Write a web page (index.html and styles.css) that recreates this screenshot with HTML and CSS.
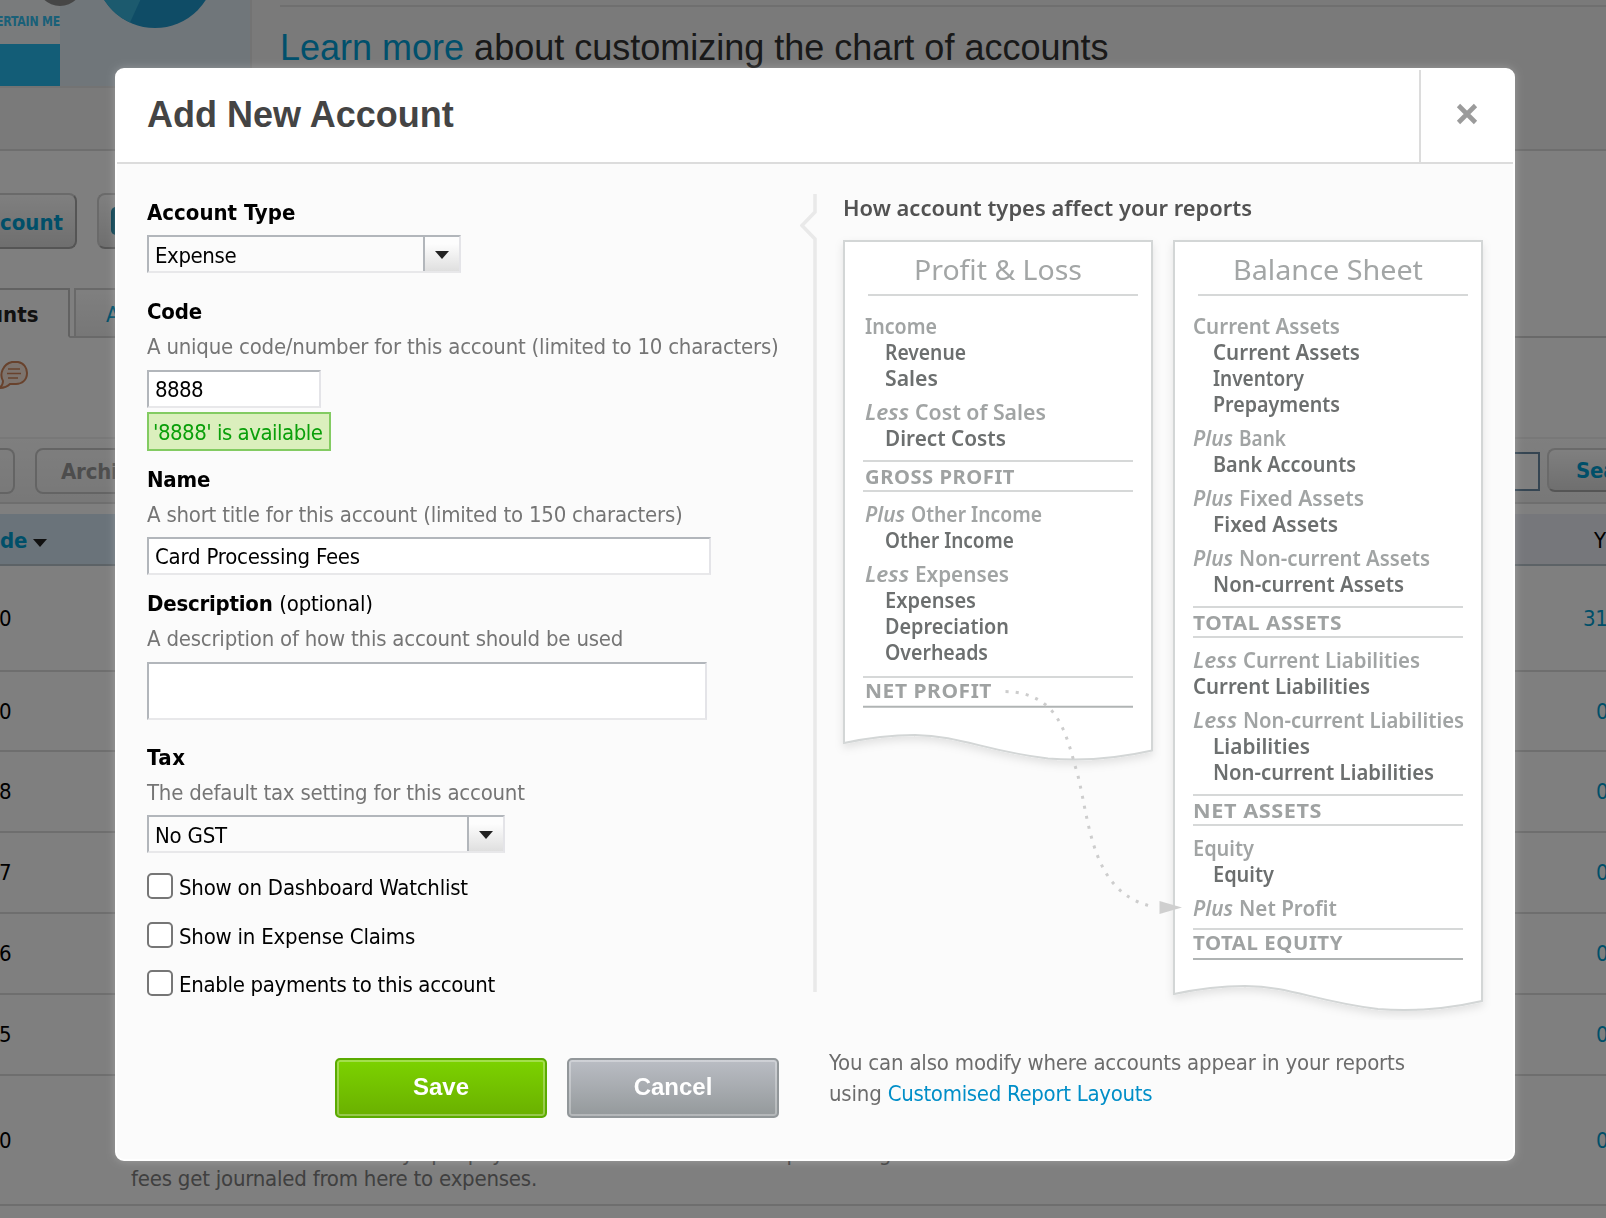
FILE: index.html
```html
<!DOCTYPE html>
<html lang="en">
  <head>
    <meta charset="UTF-8" />
    <meta name="viewport" content="width=device-width, initial-scale=1.0" />
    <title>Chart of Accounts</title>
    <link rel="stylesheet" href="styles.css">
  </head>
  <body>
    <div class="page">
      <section class="banner">
        <svg class="banner-art" width="256" height="92" viewBox="0 0 256 92">
          <rect width="252" height="88" fill="#e6e6e6" />
          <rect width="250" height="86" fill="#e0ecf4" />
          <rect width="60" height="44" fill="#f2f6f8" />
          <rect y="44" width="60" height="42" fill="#26baee" />
          <circle cx="60" cy="-17" r="23" fill="#8c8c8c" />
          <circle cx="155" cy="-32" r="60" fill="#1e98cc" />
          <path d="M155 -32 L130 22.500 A60 60 0 0 1 95 -32 Z" fill="#38b4dc" />
          <text class="art-text" x="-4" y="26" textLength="64" lengthAdjust="spacingAndGlyphs">ERTAIN ME</text>
        </svg>
        <div class="banner-copy"><a href="#">Learn more</a> about customizing the chart of accounts</div>
      </section>

      <div class="toolbar">
        <button class="btn btn-count">count</button>
        <button class="btn btn-next"><span class="btn-icon"></span></button>
      </div>

      <nav class="tabs">
        <span class="tab tab-active">unts</span>
        <span class="tab">A</span>
      </nav>

      <div class="help">
        <svg width="30" height="32" viewBox="0 0 30 32">
          <path d="M12 2 H18 C24 3 27 8 27 13 C27 20 22 24 16 24 H10 C7 27 3 28 -1 28 C2 26 3 24 3 21 C-1 14 3 4 12 2 Z" fill="#fbe9dc" stroke="#d0855a" stroke-width="2" />
          <path d="M8 9 H20 M7 13.500 H21 M8 18 H18" stroke="#d0855a" stroke-width="1.600" />
        </svg>
      </div>

      <div class="actions">
        <button class="btn btn-off btn-cut"></button>
        <button class="btn btn-off btn-archive">Archi</button>
        <span class="search"></span>
        <button class="btn btn-search">Sea</button>
      </div>

      <div class="thead">
        <span class="th-code">de <i class="caret"></i></span>
        <span class="th-ytd">Y</span>
      </div>
      <div class="row row-first"><span>0</span><a href="#" class="wide">31</a></div>
      <div class="row row-80"><span>0</span><a href="#">0</a></div>
      <div class="row"><span>8</span><a href="#">0</a></div>
      <div class="row"><span>7</span><a href="#">0</a></div>
      <div class="row"><span>6</span><a href="#">0</a></div>
      <div class="row"><span>5</span><a href="#">0</a></div>
      <div class="row row-last">
        <span>0</span>
        <p>reconcile invoices created by openpay for our own online sales. CC processing<br />fees get journaled from here to expenses.</p>
        <a href="#">0</a>
      </div>
    </div>

    <div class="overlay">
      <div class="modal">
        <div class="modal-header">
          <h1>Add New Account</h1>
          <button class="close" aria-label="Close">
            <svg width="22" height="22" viewBox="0 0 22 22">
              <path d="M2.500 2.500 L19.500 19.500 M19.500 2.500 L2.500 19.500" stroke="#9b9b9b" stroke-width="4.600" />
            </svg>
          </button>
        </div>

        <div class="modal-body">
          <form class="form">
            <label class="label label-type">Account Type</label>
            <div class="select select-type"><span>Expense</span><i class="arrow"></i></div>

            <label class="label label-code">Code</label>
            <div class="hint">A unique code/number for this account (limited to 10 characters)</div>
            <input class="input input-code" type="text" value="8888" />
            <div class="available">'8888' is available</div>

            <label class="label label-next">Name</label>
            <div class="hint">A short title for this account (limited to 150 characters)</div>
            <input class="input input-name" type="text" value="Card Processing Fees" />

            <label class="label label-next">Description <span class="optional">(optional)</span></label>
            <div class="hint">A description of how this account should be used</div>
            <textarea class="input input-desc"></textarea>

            <label class="label label-tax">Tax</label>
            <div class="hint hint-tax">The default tax setting for this account</div>
            <div class="select select-tax"><span>No GST</span><i class="arrow"></i></div>

            <div class="checks">
              <label class="check"><input type="checkbox" /><span>Show on Dashboard Watchlist</span></label>
              <label class="check"><input type="checkbox" /><span>Show in Expense Claims</span></label>
              <label class="check"><input type="checkbox" /><span>Enable payments to this account</span></label>
            </div>

            <div class="buttons">
              <button type="button" class="action save">Save</button>
              <button type="button" class="action cancel">Cancel</button>
            </div>
          </form>

          <aside class="side">
            <svg class="reports" width="700" height="830" viewBox="800 190 700 830">
              <defs>
                <filter id="paper-shadow" x="-5%" y="-5%" width="110%" height="110%">
                  <feDropShadow dx="0" dy="4" stdDeviation="4" flood-color="#000" flood-opacity="0.100" />
                </filter>
              </defs>

              <path d="M815 194 V212 L802 225.500 L815 239 V992" class="divider" />
              <text class="heading" x="843" y="216" textLength="409" lengthAdjust="spacingAndGlyphs">How account types affect your reports</text>

              <!-- Profit & Loss -->
              <path class="paper" d="M844 241 H1152 V750.500 C1115 759 1080 761 1048 758.500 C985 751 960 735.500 915 735 C890 735 865 738.500 844 743 Z" />
              <text class="title" x="914" y="280" textLength="168" lengthAdjust="spacingAndGlyphs">Profit &amp; Loss</text>
              <path class="rule" d="M868 295 H1138 M863 461 H1133 M863 491 H1133 M863 677 H1133" />
              <path class="rule-dark" d="M863 706.700 H1133" />
              <text class="group" x="865" y="334" textLength="72" lengthAdjust="spacingAndGlyphs">Income</text>
              <text class="item" x="885" y="360" textLength="81" lengthAdjust="spacingAndGlyphs">Revenue</text>
              <text class="item" x="885" y="386" textLength="53" lengthAdjust="spacingAndGlyphs">Sales</text>
              <text class="group op" x="865" y="420" textLength="44" lengthAdjust="spacingAndGlyphs">Less</text>
              <text class="group" x="915" y="420" textLength="131" lengthAdjust="spacingAndGlyphs">Cost of Sales</text>
              <text class="item" x="885" y="446" textLength="121" lengthAdjust="spacingAndGlyphs">Direct Costs</text>
              <text class="total" x="865" y="484" textLength="150" lengthAdjust="spacingAndGlyphs">GROSS PROFIT</text>
              <text class="group op" x="865" y="522" textLength="40" lengthAdjust="spacingAndGlyphs">Plus</text>
              <text class="group" x="911" y="522" textLength="131" lengthAdjust="spacingAndGlyphs">Other Income</text>
              <text class="item" x="885" y="548" textLength="129" lengthAdjust="spacingAndGlyphs">Other Income</text>
              <text class="group op" x="865" y="582" textLength="44" lengthAdjust="spacingAndGlyphs">Less</text>
              <text class="group" x="915" y="582" textLength="94" lengthAdjust="spacingAndGlyphs">Expenses</text>
              <text class="item" x="885" y="608" textLength="91" lengthAdjust="spacingAndGlyphs">Expenses</text>
              <text class="item" x="885" y="634" textLength="124" lengthAdjust="spacingAndGlyphs">Depreciation</text>
              <text class="item" x="885" y="660" textLength="103" lengthAdjust="spacingAndGlyphs">Overheads</text>
              <text class="total" x="865" y="698" textLength="127" lengthAdjust="spacingAndGlyphs">NET PROFIT</text>

              <!-- Balance Sheet -->
              <path class="paper" d="M1174 241 H1482 V1001 C1445 1009.500 1410 1011.500 1378 1009 C1315 1001.500 1290 986 1245 986 C1220 986 1195 989.500 1174 994 Z" />
              <text class="title" x="1233" y="280" textLength="190" lengthAdjust="spacingAndGlyphs">Balance Sheet</text>
              <path class="rule" d="M1198 295 H1468 M1193 607 H1463 M1193 637 H1463 M1193 795 H1463 M1193 825 H1463 M1193 929 H1463" />
              <path class="rule-dark" d="M1193 959 H1463" />
              <text class="group" x="1193" y="334" textLength="147" lengthAdjust="spacingAndGlyphs">Current Assets</text>
              <text class="item" x="1213" y="360" textLength="147" lengthAdjust="spacingAndGlyphs">Current Assets</text>
              <text class="item" x="1213" y="386" textLength="91" lengthAdjust="spacingAndGlyphs">Inventory</text>
              <text class="item" x="1213" y="412" textLength="127" lengthAdjust="spacingAndGlyphs">Prepayments</text>
              <text class="group op" x="1193" y="446" textLength="40" lengthAdjust="spacingAndGlyphs">Plus</text>
              <text class="group" x="1239" y="446" textLength="47" lengthAdjust="spacingAndGlyphs">Bank</text>
              <text class="item" x="1213" y="472" textLength="143" lengthAdjust="spacingAndGlyphs">Bank Accounts</text>
              <text class="group op" x="1193" y="506" textLength="40" lengthAdjust="spacingAndGlyphs">Plus</text>
              <text class="group" x="1239" y="506" textLength="125" lengthAdjust="spacingAndGlyphs">Fixed Assets</text>
              <text class="item" x="1213" y="532" textLength="125" lengthAdjust="spacingAndGlyphs">Fixed Assets</text>
              <text class="group op" x="1193" y="566" textLength="40" lengthAdjust="spacingAndGlyphs">Plus</text>
              <text class="group" x="1239" y="566" textLength="191" lengthAdjust="spacingAndGlyphs">Non-current Assets</text>
              <text class="item" x="1213" y="592" textLength="191" lengthAdjust="spacingAndGlyphs">Non-current Assets</text>
              <text class="total" x="1193" y="630" textLength="149" lengthAdjust="spacingAndGlyphs">TOTAL ASSETS</text>
              <text class="group op" x="1193" y="668" textLength="44" lengthAdjust="spacingAndGlyphs">Less</text>
              <text class="group" x="1243" y="668" textLength="177" lengthAdjust="spacingAndGlyphs">Current Liabilities</text>
              <text class="item" x="1193" y="694" textLength="177" lengthAdjust="spacingAndGlyphs">Current Liabilities</text>
              <text class="group op" x="1193" y="728" textLength="44" lengthAdjust="spacingAndGlyphs">Less</text>
              <text class="group" x="1243" y="728" textLength="221" lengthAdjust="spacingAndGlyphs">Non-current Liabilities</text>
              <text class="item" x="1213" y="754" textLength="97" lengthAdjust="spacingAndGlyphs">Liabilities</text>
              <text class="item" x="1213" y="780" textLength="221" lengthAdjust="spacingAndGlyphs">Non-current Liabilities</text>
              <text class="total" x="1193" y="818" textLength="129" lengthAdjust="spacingAndGlyphs">NET ASSETS</text>
              <text class="group" x="1193" y="856" textLength="61" lengthAdjust="spacingAndGlyphs">Equity</text>
              <text class="item" x="1213" y="882" textLength="61" lengthAdjust="spacingAndGlyphs">Equity</text>
              <text class="group op" x="1193" y="916" textLength="40" lengthAdjust="spacingAndGlyphs">Plus</text>
              <text class="group" x="1239" y="916" textLength="98" lengthAdjust="spacingAndGlyphs">Net Profit</text>
              <text class="total" x="1193" y="950" textLength="150" lengthAdjust="spacingAndGlyphs">TOTAL EQUITY</text>

              <!-- net profit flows into equity -->
              <path class="flow" d="M1005.500 691.500 C1060 693 1066 735 1078 776 C1090 825 1092 895 1155 907" />
              <path d="M1159.500 901 L1182 907.500 L1159.500 914 Z" fill="#cfcfcf" />
            </svg>
            <p class="note">You can also modify where accounts appear in your reports<br />using <a href="#">Customised Report Layouts</a></p>
          </aside>
        </div>
      </div>
    </div>
  </body>
</html>
```
FILE: styles.css
```css
:root {
  --font: "DejaVu Sans Condensed", "Noto Sans", sans-serif;
  --heading-font: "Liberation Sans", Arial, sans-serif;
  --link: #009fd2;
  --line: #dcdcdc;
}

* {
  box-sizing: border-box;
}

body {
  margin: 0;
  font-family: var(--font);
  font-size: 22px;
  letter-spacing: -0.22px;
  color: #000;
  background: #fff;
}

button,
input,
textarea {
  font: inherit;
  letter-spacing: inherit;
  margin: 0;
}

a {
  color: #008ec8;
  text-decoration: none;
}

/* page behind the dialog */
.page {
  height: 1218px;
  overflow: hidden;
}

.page a {
  color: var(--link);
}

.banner {
  display: flex;
  height: 151px;
  background: #f4f4f4;
  border-bottom: 2px solid var(--line);
}

.banner-art {
  flex: none;
}

.art-text {
  font: 700 14px var(--font);
  fill: #34c0f0;
}

.banner-copy {
  flex: 1;
  height: 70px;
  margin: 5px 0 0 24px;
  padding-top: 19px;
  border-top: 2px solid #dedede;
  font: 36px/44px var(--heading-font);
  letter-spacing: 0;
  color: #333;
}

.banner-copy a {
  color: #00a0d8;
}

.toolbar {
  display: flex;
  gap: 20px;
  height: 137px;
  padding-top: 42px;
}

.btn {
  border: 2px solid #d4d4d4;
  border-right-color: #aaa;
  border-bottom-color: #aaa;
  border-radius: 8px;
  background: linear-gradient(#fff, #dedede);
  font-weight: 700;
  color: var(--link);
  white-space: nowrap;
}

.btn-count {
  width: 77px;
  height: 56px;
  padding: 2px 14px 0 0;
  border-left: 0;
  border-radius: 0 8px 8px 0;
  text-align: right;
  letter-spacing: 0;
}

.btn-next {
  width: 220px;
  height: 56px;
  padding: 0 12px;
}

.btn-icon {
  display: block;
  width: 28px;
  height: 28px;
  border-radius: 5px;
  background: #1580a0;
}

.tabs {
  display: flex;
  align-items: flex-start;
  height: 50px;
  border-bottom: 2px solid #d2d2d2;
}

.tab {
  width: 160px;
  height: 50px;
  padding: 10px 30px;
  border: 2px solid #d2d2d2;
  background: linear-gradient(#fff, #eee);
  line-height: 30px;
  color: var(--link);
}

.tab-active {
  width: 70px;
  margin-right: 4px;
  padding: 10px 0;
  border-left: 0;
  border-color: #c4c4c4;
  border-bottom-color: #fff;
  background: #fff;
  font-weight: 700;
  letter-spacing: 0;
  text-indent: -11px;
  color: #222;
}

.help {
  height: 99px;
  padding-top: 22px;
}

.actions {
  display: flex;
  height: 67px;
  padding-top: 9px;
  border-top: 2px solid #f0f0f0;
  border-bottom: 2px solid #dcdcdc;
  background: linear-gradient(#fefefe, #f0f0f0);
}

.btn-off {
  height: 46px;
  border-color: #c8c8c8;
  background: transparent;
  color: #9a9a9a;
}

.btn-cut {
  width: 15px;
  border-left: 0;
  border-radius: 0 8px 8px 0;
}

.btn-archive {
  width: 140px;
  margin-left: 20px;
  padding: 0 24px;
  text-align: left;
}

.search {
  width: 365px;
  height: 39px;
  margin: 4px 7px 0 auto;
  border: 2px solid #6b8ba5;
  background: #fff;
}

.btn-search {
  flex: none;
  width: 59px;
  height: 44px;
  padding: 0 0 0 27px;
  border-right: 0;
  border-radius: 8px 0 0 8px;
  text-align: left;
  overflow: hidden;
}

.thead {
  display: flex;
  justify-content: space-between;
  height: 52px;
  margin-top: 10px;
  border-bottom: 2px solid #b8c4cc;
  background: #eceef6;
  line-height: 53px;
}

.th-code {
  width: 240px;
  height: 50px;
  background: #d4e6f4;
  font-weight: 700;
  color: var(--link);
}

.caret {
  display: inline-block;
  margin-left: -1px;
  border: 7px solid transparent;
  border-top: 8px solid #222;
  border-bottom: 0;
  vertical-align: 1px;
}

.th-ytd {
  width: 12px;
}

.row {
  display: flex;
  align-items: center;
  justify-content: space-between;
  height: 81px;
  border-bottom: 2px solid var(--line);
}

.row-first {
  height: 106px;
}

.row-80 {
  height: 80px;
}

.row span {
  width: 131px;
  text-indent: -1px;
}

.row a {
  width: 10px;
  white-space: nowrap;
}

.row a.wide {
  width: 23px;
}

.row-last {
  height: 130px;
}

.row-last p {
  flex: 1;
  align-self: flex-end;
  margin: 0 0 13px;
  line-height: 25px;
  color: #808080;
}

/* dialog */
.overlay {
  position: fixed;
  inset: 0;
  padding: 68px 91px 57px 115px;
  background: rgba(0, 0, 0, 0.5);
}

.modal {
  height: 1093px;
  border: 2px solid #fff;
  border-radius: 9px;
  background: #fbfbfb;
  box-shadow: 0 0 8px rgba(255, 255, 255, 0.25);
  overflow: hidden;
}

.modal-header {
  display: flex;
  justify-content: space-between;
  height: 94px;
  border-bottom: 2px solid var(--line);
  background: #fff;
}

.modal-header h1 {
  margin: 0;
  padding-left: 30px;
  font: 700 36px/90px var(--heading-font);
  letter-spacing: 0;
  color: #444;
}

.close {
  width: 94px;
  padding: 0;
  border: 0;
  border-left: 2px solid var(--line);
  background: none;
}

.close svg {
  display: block;
  margin: -4px auto 0;
}

.modal-body {
  display: flex;
}

.form {
  width: 683px;
  padding: 34px 0 0 30px;
}

.label {
  display: block;
  line-height: 30px;
  font-weight: 700;
}

.label-type {
  letter-spacing: 0;
}

.label-code {
  margin-top: 24px;
}

.label-next {
  margin-top: 14px;
}

.label-tax {
  margin-top: 23px;
  letter-spacing: 0.6px;
}

.optional {
  font-weight: 400;
}

.hint {
  margin: 5px 0 8px;
  line-height: 30px;
  color: #757575;
}

.hint-tax {
  margin-bottom: 7px;
}

.input,
.select {
  display: block;
  height: 38px;
  border: 2px solid;
  border-color: #b2b6bb #e4e4e8 #e8e8ea #b2b6bb;
  border-radius: 0;
  outline: 0;
}

.input {
  padding: 1px 6px 0;
  background: #fff;
  color: #000;
}

.input-code {
  width: 174px;
  letter-spacing: -0.6px;
}

.input-name {
  width: 564px;
  margin-top: -1px;
}

.input-desc {
  width: 560px;
  height: 58px;
  resize: none;
}

.select {
  display: flex;
  justify-content: space-between;
  padding-left: 6px;
  line-height: 37px;
}

.select-type {
  width: 314px;
  margin-top: 7px;
  letter-spacing: -0.4px;
}

.select-tax {
  width: 358px;
}

.arrow {
  display: flex;
  align-items: center;
  justify-content: center;
  width: 36px;
  border-left: 2px solid #b2b6bb;
  background: linear-gradient(#fdfdfd 20%, #dfdfdf);
}

.arrow::before {
  content: "";
  margin-top: 1px;
  border: 7.5px solid transparent;
  border-top: 8px solid #222;
  border-bottom: 0;
}

.available {
  width: 184px;
  height: 39px;
  margin-top: 4px;
  padding-left: 4px;
  border: 2px solid #83cb62;
  background: #dbefbd;
  line-height: 37px;
  letter-spacing: -0.5px;
  white-space: nowrap;
  color: #0a9f0a;
}

.checks {
  padding-top: 20px;
}

.check {
  display: flex;
  height: 48.5px;
  line-height: 29px;
}

.check:last-child {
  letter-spacing: -0.32px;
}

.check input {
  appearance: none;
  width: 26px;
  height: 26px;
  margin-right: 6px;
  border: 2px solid #767676;
  border-radius: 5px;
  background: #fff;
}

.buttons {
  display: flex;
  gap: 20px;
  margin: 39.5px 0 0 188px;
}

.action {
  width: 212px;
  height: 60px;
  padding: 0 0 2px;
  border: 2px solid #5aab00;
  border-radius: 5px;
  background: linear-gradient(#7cd200, #6ab000);
  box-shadow: inset 0 0 0 2px rgba(255, 255, 255, 0.3);
  font: 700 24px var(--heading-font);
  letter-spacing: 0;
  color: #fff;
}

.cancel {
  border-color: #92979a;
  background: linear-gradient(#babdc4, #94999b);
}

.side {
  padding-top: 26px;
}

.reports {
  display: block;
  letter-spacing: 0;
}

.divider {
  fill: none;
  stroke: #e9e9e9;
  stroke-width: 3.5;
}

.paper {
  fill: #fff;
  stroke: #d3d6d6;
  stroke-width: 2;
  filter: url(#paper-shadow);
}

.heading,
.title,
.group,
.item,
.total {
  font-family: "Noto Sans", sans-serif;
}

.heading {
  font-size: 22px;
  font-weight: 600;
  fill: #525252;
}

.title {
  font-size: 28px;
  fill: #a3a6a6;
}

.group,
.item {
  font-size: 21.5px;
  font-weight: 600;
}

.group {
  fill: #a1a4a4;
}

.item {
  fill: #6c6f6f;
}

.op {
  font-style: italic;
}

.total {
  font-size: 19px;
  font-weight: 700;
  letter-spacing: 0.5px;
  fill: #9fa2a2;
}

.rule,
.rule-dark {
  stroke: #d6d8d8;
  stroke-width: 2;
}

.rule-dark {
  stroke: #b0b4b4;
}

.flow {
  fill: none;
  stroke: #cdcdcd;
  stroke-width: 3;
  stroke-dasharray: 3 7.200;
}

.note {
  margin: 27px 0 0 29px;
  line-height: 31px;
  letter-spacing: -0.19px;
  color: #6c6c6c;
}

.note a {
  letter-spacing: -0.3px;
}
```
